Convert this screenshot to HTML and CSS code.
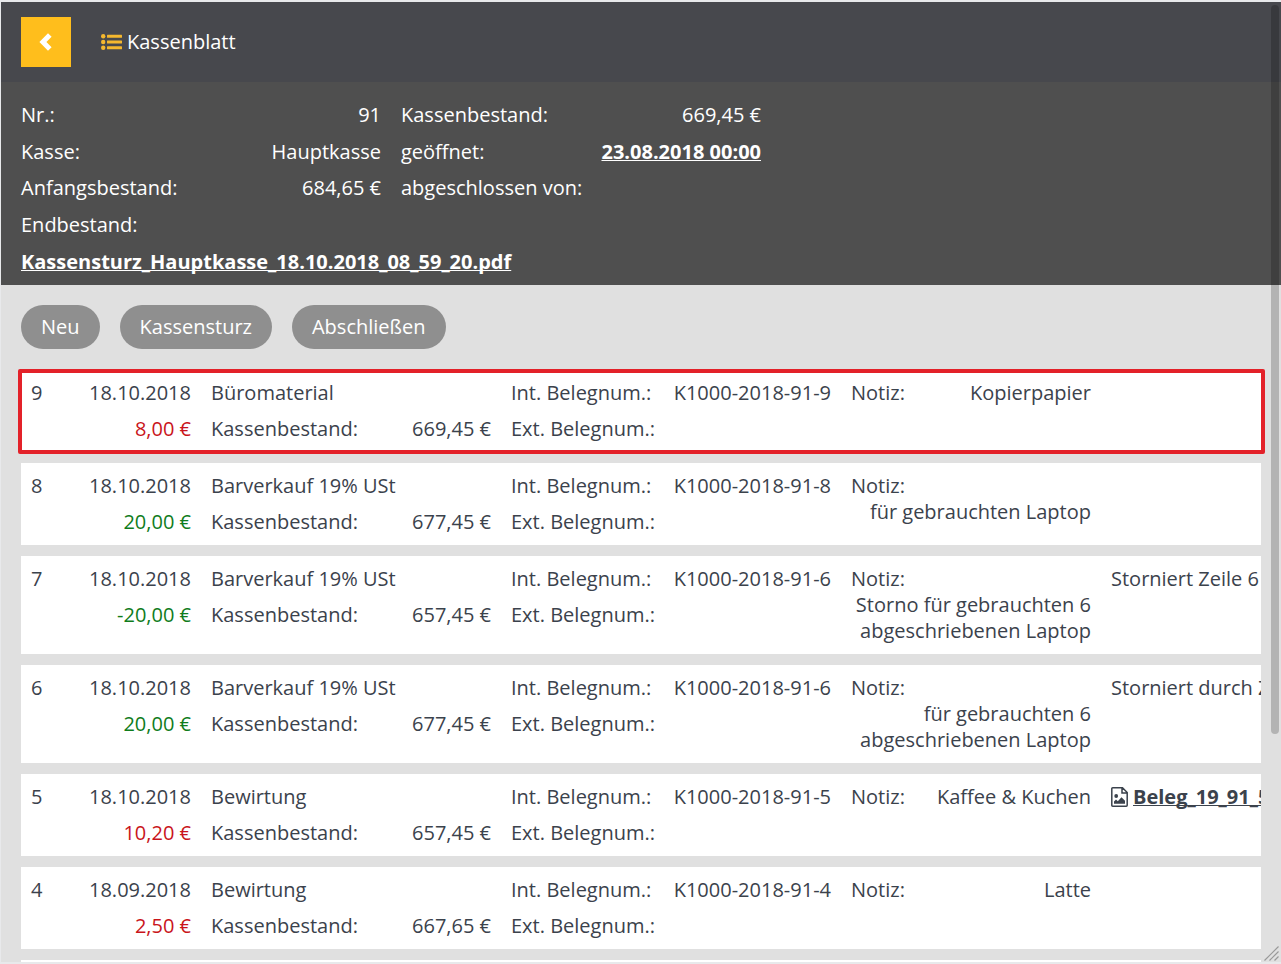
FILE: index.html
```html
<!DOCTYPE html>
<html lang="de">
<head>
<meta charset="utf-8">
<meta name="viewport" content="width=device-width, initial-scale=1">
<title>Kassenblatt</title>
<link rel="stylesheet" href="styles.css">
</head>
<body class="window">
<header class="topbar">
  <button class="back" type="button" aria-label="Zurück">
    <svg width="14" height="20" viewBox="0 0 14 20" aria-hidden="true"><path d="M9 1.2 12.6 4.8 7.4 10 12.6 15.200 9 18.800 0.400 10Z" fill="#fff"/></svg>
  </button>
  <h1 class="title">
    <svg width="21" height="16" viewBox="0 0 21 16" aria-hidden="true"><g fill="#f5b82e"><circle cx="2.200" cy="2.200" r="2.200"/><circle cx="2.200" cy="8" r="2.200"/><circle cx="2.200" cy="13.800" r="2.200"/><rect x="6" y="0.700" width="15" height="3" rx=".5"/><rect x="6" y="6.500" width="15" height="3" rx=".5"/><rect x="6" y="12.300" width="15" height="3" rx=".5"/></g></svg>
    Kassenblatt
  </h1>
</header>
<section class="summary">
  <dl class="facts">
    <div class="pair"><dt>Nr.:</dt><dd>91</dd></div>
    <div class="pair"><dt>Kassenbestand:</dt><dd>669,45 €</dd></div>
    <div class="pair"><dt>Kasse:</dt><dd>Hauptkasse</dd></div>
    <div class="pair"><dt>geöffnet:</dt><dd><a class="link" href="#">23.08.2018 00:00</a></dd></div>
    <div class="pair"><dt>Anfangsbestand:</dt><dd>684,65 €</dd></div>
    <div class="pair"><dt>abgeschlossen von:</dt><dd></dd></div>
    <div class="pair"><dt>Endbestand:</dt><dd></dd></div>
    <div class="file"><a class="link" href="#">Kassensturz_Hauptkasse_18.10.2018_08_59_20.pdf</a></div>
  </dl>
</section>
<main class="content">
  <div class="actions">
    <button class="pill" type="button">Neu</button>
    <button class="pill" type="button">Kassensturz</button>
    <button class="pill" type="button">Abschließen</button>
  </div>
  <div class="entries">
    <article class="entry selected"><div class="cells">
      <div><div class="pair"><span>9</span><span>18.10.2018</span></div><div class="pair"><span class="amount out">8,00 €</span></div></div>
      <div><div class="pair"><span>Büromaterial</span></div><div class="pair"><span>Kassenbestand:</span><span>669,45 €</span></div></div>
      <div><div class="pair"><span>Int. Belegnum.:</span><span>K1000-2018-91-9</span></div><div class="pair"><span>Ext. Belegnum.:</span></div></div>
      <div class="pair note"><span>Notiz:</span><span class="note-text">Kopierpapier</span></div>
    </div></article>
    <article class="entry"><div class="cells">
      <div><div class="pair"><span>8</span><span>18.10.2018</span></div><div class="pair"><span class="amount in">20,00 €</span></div></div>
      <div><div class="pair"><span>Barverkauf 19% USt</span></div><div class="pair"><span>Kassenbestand:</span><span>677,45 €</span></div></div>
      <div><div class="pair"><span>Int. Belegnum.:</span><span>K1000-2018-91-8</span></div><div class="pair"><span>Ext. Belegnum.:</span></div></div>
      <div class="pair note"><span>Notiz:</span><span class="note-text">für gebrauchten Laptop</span></div>
    </div></article>
    <article class="entry"><div class="cells">
      <div><div class="pair"><span>7</span><span>18.10.2018</span></div><div class="pair"><span class="amount in">-20,00 €</span></div></div>
      <div><div class="pair"><span>Barverkauf 19% USt</span></div><div class="pair"><span>Kassenbestand:</span><span>657,45 €</span></div></div>
      <div><div class="pair"><span>Int. Belegnum.:</span><span>K1000-2018-91-6</span></div><div class="pair"><span>Ext. Belegnum.:</span></div></div>
      <div class="pair note"><span>Notiz:</span><span class="note-text">Storno für gebrauchten 6 abgeschriebenen Laptop</span></div>
      <div class="pair extra">Storniert Zeile 6</div>
    </div></article>
    <article class="entry"><div class="cells">
      <div><div class="pair"><span>6</span><span>18.10.2018</span></div><div class="pair"><span class="amount in">20,00 €</span></div></div>
      <div><div class="pair"><span>Barverkauf 19% USt</span></div><div class="pair"><span>Kassenbestand:</span><span>677,45 €</span></div></div>
      <div><div class="pair"><span>Int. Belegnum.:</span><span>K1000-2018-91-6</span></div><div class="pair"><span>Ext. Belegnum.:</span></div></div>
      <div class="pair note"><span>Notiz:</span><span class="note-text">für gebrauchten 6 abgeschriebenen Laptop</span></div>
      <div class="pair extra">Storniert durch Z</div>
    </div></article>
    <article class="entry"><div class="cells">
      <div><div class="pair"><span>5</span><span>18.10.2018</span></div><div class="pair"><span class="amount out">10,20 €</span></div></div>
      <div><div class="pair"><span>Bewirtung</span></div><div class="pair"><span>Kassenbestand:</span><span>657,45 €</span></div></div>
      <div><div class="pair"><span>Int. Belegnum.:</span><span>K1000-2018-91-5</span></div><div class="pair"><span>Ext. Belegnum.:</span></div></div>
      <div class="pair note"><span>Notiz:</span><span class="note-text">Kaffee &amp; Kuchen</span></div>
      <div class="pair extra receipt">
        <svg width="17" height="20" viewBox="0 0 17 20" aria-hidden="true"><path d="M1.700.8H11.500L16.200 5.500V18.300Q16.200 19.200 15.300 19.200H1.700Q.8 19.200.8 18.300V1.700Q.8.8 1.700.8ZM11 1V6H16" fill="none" stroke="#3b424c" stroke-width="1.500"/><circle cx="5.200" cy="9" r="1.900" fill="#3b424c"/><path d="M3 16.800V14.500L5 12.500 6.800 14.200 10.500 10.300 14 13.800V16.800Z" fill="#3b424c"/></svg>
        <a class="link" href="#">Beleg_19_91_5</a>
      </div>
    </div></article>
    <article class="entry"><div class="cells">
      <div><div class="pair"><span>4</span><span>18.09.2018</span></div><div class="pair"><span class="amount out">2,50 €</span></div></div>
      <div><div class="pair"><span>Bewirtung</span></div><div class="pair"><span>Kassenbestand:</span><span>667,65 €</span></div></div>
      <div><div class="pair"><span>Int. Belegnum.:</span><span>K1000-2018-91-4</span></div><div class="pair"><span>Ext. Belegnum.:</span></div></div>
      <div class="pair note"><span>Notiz:</span><span class="note-text">Latte</span></div>
    </div></article>
    <article class="entry"><div class="cells"></div></article>
  </div>
</main>
<div class="scroll-thumb"></div>
<svg class="grip" width="15" height="15" viewBox="0 0 15 15" aria-hidden="true"><path d="M.5 14.500 14.500.5M5.500 14.500 14.500 5.500M10.500 14.500 14.500 10.500" stroke="#999" stroke-width="1.200" fill="none"/></svg>
</body>
</html>
```
FILE: styles.css
```css
* { box-sizing: border-box; }

.window {
  position: relative;
  display: flex;
  flex-direction: column;
  height: 100vh;
  margin: 0;
  overflow: hidden;
  border: solid #e8e9eb;
  border-width: 2px 0 2px 1px;
  background: #e0e0e0;
  color: #3b424c;
  font: 20px/26px "Open Sans", "Noto Sans", sans-serif;
}

.topbar {
  display: flex;
  flex: none;
  align-items: center;
  gap: 30px;
  padding: 15px 20px;
  background: #47484d;
  color: #fff;
}

.back {
  display: flex;
  align-items: center;
  justify-content: center;
  width: 50px;
  height: 50px;
  padding: 0;
  border: 0;
  background: #ffbe1c;
}

.title {
  display: flex;
  align-items: center;
  gap: 5px;
  margin: 0;
  font-size: 20px;
  font-weight: 400;
}

.summary {
  flex: none;
  padding: 15px 20px 5px;
  background: #4f4f4f;
  color: #fff;
}

.facts {
  display: grid;
  grid-template-columns: 360px 360px;
  grid-auto-rows: 1fr;
  column-gap: 20px;
  align-items: center;
  min-height: 183px;
  margin: 0;
}

.facts dd { margin: 0; }

.file { grid-column: 1 / -1; }

.link {
  color: inherit;
  font-weight: 700;
  text-decoration: underline;
  text-decoration-thickness: 1px;
  text-decoration-skip-ink: none;
}

.pair {
  display: flex;
  justify-content: space-between;
}

.content {
  flex: 1;
  min-height: 0;
  padding: 20px 20px 0;
}

.actions {
  display: flex;
  gap: 20px;
  margin-bottom: 21px;
}

.pill {
  height: 44px;
  padding: 0 20px;
  border: 0;
  border-radius: 22px;
  background: #8f8f8f;
  color: #fff;
  font: inherit;
}

.entries {
  display: flex;
  flex-direction: column;
  gap: 11px;
}

.entry {
  position: relative;
  background: #fff;
}

.selected::after {
  content: "";
  position: absolute;
  inset: -1px -4px -2px -3px;
  border: 4px solid #e32129;
  border-radius: 2px;
}

.cells {
  display: grid;
  grid-template-columns: 180px 300px 340px 260px 1fr;
  min-height: 82px;
  padding: 5px 0;
  overflow: hidden;
}

.cells > * { min-width: 0; }

.cells .pair { padding: 5px 10px; }

.amount { margin-left: auto; }
.out { color: #c9151b; }
.in { color: #107c1c; }

.cells .note {
  flex-wrap: wrap;
  align-content: flex-start;
}

.note-text {
  margin-left: auto;
  text-align: right;
}

.cells .extra {
  justify-content: flex-start;
  padding-right: 0;
  white-space: nowrap;
}

.receipt { gap: 5px; }

.receipt svg {
  flex: none;
  margin-top: 3px;
}

.scroll-thumb {
  position: absolute;
  top: 3px;
  right: 2px;
  width: 8px;
  height: 729px;
  border-radius: 4px;
  background: rgba(0, 0, 0, 0.2);
}

.grip {
  position: absolute;
  right: 2px;
  bottom: 1px;
}
```
